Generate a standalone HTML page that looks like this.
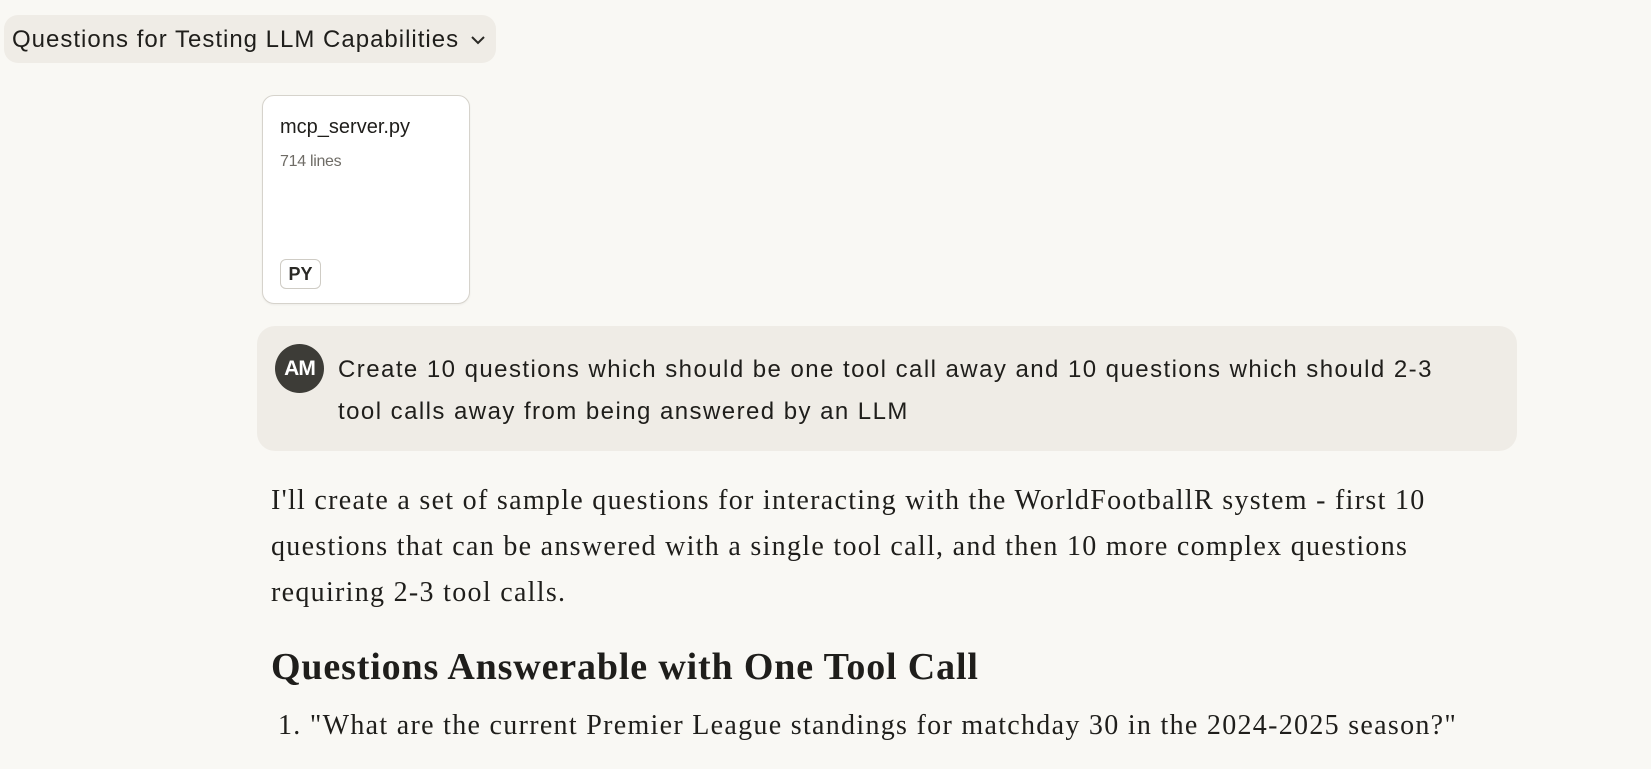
<!DOCTYPE html>
<html><head><meta charset="utf-8"><style>
html,body{margin:0;padding:0;width:1651px;height:769px;overflow:hidden;background:#f9f8f4;}
body{position:relative;font-family:"Liberation Sans",sans-serif;color:#1f1e1b;}
.pill{position:absolute;left:4px;top:15px;width:492px;height:48px;background:#efece6;border-radius:14px;}
.pill span{position:absolute;left:8px;top:11px;font-size:24px;letter-spacing:1px;white-space:nowrap;}
.pill svg{position:absolute;left:466px;top:20px;}
.card{position:absolute;left:262px;top:95px;width:206px;height:207px;background:#fff;border:1px solid #d6d3cc;border-radius:12px;box-shadow:0 1px 2px rgba(0,0,0,.05);}
.fn{position:absolute;left:17px;top:20px;font-size:20px;}
.ln{position:absolute;left:17px;top:57px;font-size:16px;color:#6f6c66;letter-spacing:-0.3px;}
.py{position:absolute;left:17px;top:163px;width:39px;height:28px;border:1px solid #cfccc5;border-radius:6px;font-size:18px;font-weight:bold;text-align:center;line-height:28px;color:#2a2925;}
.bubble{position:absolute;left:257px;top:326px;width:1260px;height:125px;background:#efece6;border-radius:18px;}
.av{position:absolute;left:275px;top:344px;width:49px;height:49px;border-radius:50%;background:#3d3c37;color:#fff;font-weight:bold;font-size:21px;text-align:center;line-height:49px;letter-spacing:-1px;}
.ut{position:absolute;left:338px;top:349px;font-size:24px;line-height:42px;letter-spacing:1.45px;white-space:nowrap;}
.p{position:absolute;left:271px;top:478px;font-family:"Liberation Serif",serif;font-size:28px;line-height:46px;white-space:nowrap;letter-spacing:1.3px;}
.h{position:absolute;left:271px;top:645px;font-family:"Liberation Serif",serif;font-weight:bold;font-size:38px;white-space:nowrap;letter-spacing:0.85px;}
.li{position:absolute;left:278px;top:710px;font-family:"Liberation Serif",serif;font-size:28px;white-space:nowrap;letter-spacing:1.3px;}
</style></head><body>
<div class="pill"><span>Questions for Testing LLM Capabilities</span>
<svg width="16" height="10" viewBox="0 0 16 10"><path d="M2 2 L8 8 L14 2" stroke="#2a2925" stroke-width="2" fill="none"/></svg></div>
<div class="card"><div class="fn">mcp_server.py</div><div class="ln">714 lines</div><div class="py">PY</div></div>
<div class="bubble"></div>
<div class="av">AM</div>
<div class="ut">Create 10 questions which should be one tool call away and 10 questions which should 2-3<br>tool calls away from being answered by an LLM</div>
<div class="p">I'll create a set of sample questions for interacting with the WorldFootballR system - first 10<br>questions that can be answered with a single tool call, and then 10 more complex questions<br>requiring 2-3 tool calls.</div>
<div class="h">Questions Answerable with One Tool Call</div>
<div class="li">1. "What are the current Premier League standings for matchday 30 in the 2024-2025 season?"</div>
</body></html>
